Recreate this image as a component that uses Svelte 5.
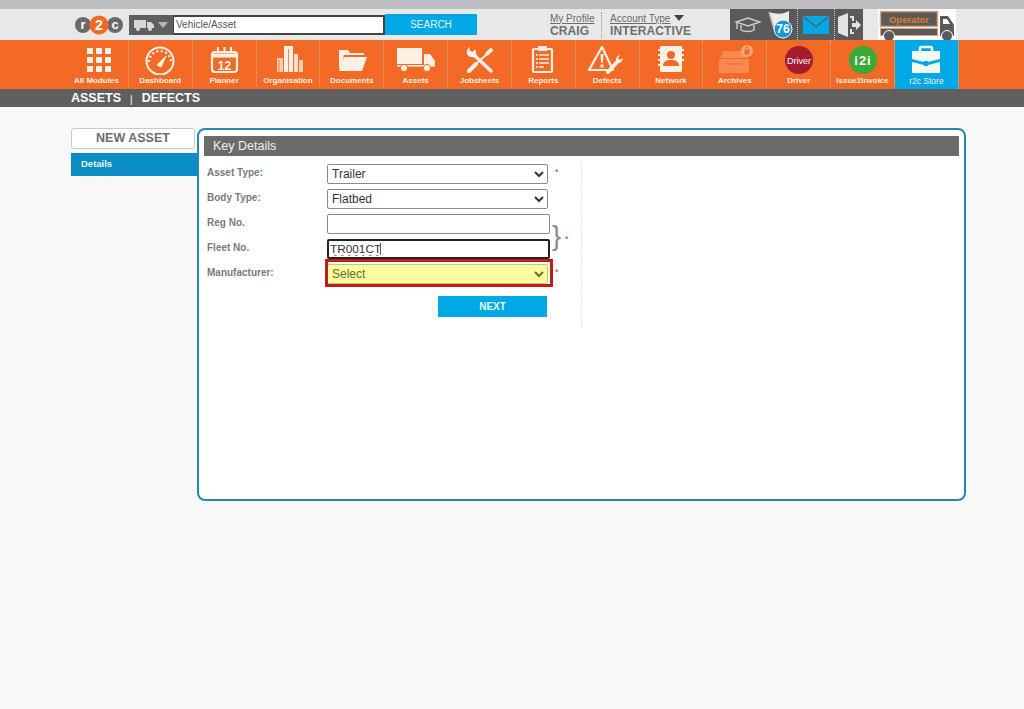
<script>
  let regNo = '';
  let fleetNo = 'TR001CT';
</script>

<div class="page">
  <div class="topstrip"></div>

  <header>
    <svg class="logo" width="48" height="20" viewBox="0 0 48 20">
      <circle cx="8" cy="10" r="8" fill="#6a6a6a" />
      <circle cx="40" cy="10" r="8" fill="#6a6a6a" />
      <circle cx="24" cy="10" r="9.5" fill="#f26a25" />
      <text x="8" y="14" class="lt">r</text>
      <text x="24" y="15" class="lt big">2</text>
      <text x="40" y="14" class="lt">c</text>
    </svg>

    <div class="typepick">
      <svg width="24" height="14" viewBox="0 0 24 14" fill="#d8d8d8">
        <rect x="1" y="2" width="12" height="8" />
        <path d="M14 4h4l3 3v3h-7z" />
        <circle cx="5" cy="11" r="2" /><circle cx="17" cy="11" r="2" />
      </svg>
      <span class="tri"></span>
    </div>
    <input class="search" type="text" value="Vehicle/Asset" />
    <button class="searchbtn">SEARCH</button>

    <div class="who">
      <a href="#profile">My Profile</a>
      <b>CRAIG</b>
    </div>
    <div class="who acct">
      <span><a href="#account">Account Type</a> <span class="tri dark"></span></span>
      <b>INTERACTIVE</b>
    </div>

    <div class="tools">
      <div class="tool" style="width:36px">
        <svg width="28" height="20" viewBox="0 0 28 20" fill="none" stroke="#cfcfcf" stroke-width="1.4">
          <path d="M2 7l12-4 12 4-12 4z" />
          <path d="M7 10v5c3 2 10 2 13 0v-5" />
          <path d="M3 8v6" />
        </svg>
      </div>
      <div class="tool flag" style="width:31px">
        <svg width="30" height="30" viewBox="0 0 30 30">
          <path d="M2 2c7 2 12 3 20-1v17c-4 3-9 3-15 1z" fill="#ececec" />
          <path d="M2 2l5 17" stroke="#bbb" stroke-width="1.5" />
          <circle cx="16" cy="19" r="9" fill="#1598d6" stroke="#fff" />
          <text x="16" y="23" class="badge">76</text>
        </svg>
      </div>
      <div class="tool dots" style="width:37px">
        <svg width="26" height="18" viewBox="0 0 26 18">
          <rect width="26" height="18" fill="#00a9e6" />
          <path d="M1 1l12 10L25 1" fill="none" stroke="#5a5a5a" stroke-width="1.3" />
        </svg>
      </div>
      <div class="tool dots" style="width:29px">
        <svg width="26" height="26" viewBox="0 0 26 26" fill="#e4e4e4">
          <path d="M2 5l10-4v24L2 21z" />
          <path d="M14 4h4v5h-2V6h-2zM14 17h2v3h2v2h-4z" />
          <path d="M16 11h4V8l5 5-5 5v-3h-4z" />
        </svg>
      </div>
    </div>

    <div class="operator">
      <svg width="78" height="31" viewBox="0 0 78 31">
        <rect x="2.5" y="2.5" width="57" height="15" fill="#5a5a5a" stroke="#d9a27d" stroke-width="1.5" />
        <text x="31" y="13.5" class="optext">Operator</text>
        <rect x="2.5" y="19.5" width="57" height="7" fill="#5a5a5a" stroke="#d9a27d" />
        <path d="M62 7h8l6 9v11H62z" fill="#5a5a5a" />
        <path d="M65 10h4l3 5h-7z" fill="#fff" />
        <circle cx="11" cy="27" r="5.5" fill="#5a5a5a" stroke="#fff" />
        <circle cx="69" cy="27" r="5.5" fill="#5a5a5a" stroke="#fff" />
      </svg>
    </div>
  </header>

  <nav>
    <a class="item" href="#modules">
      <svg viewBox="0 0 40 30" fill="#fdf1e6">
        <rect x="11" y="3" width="6" height="6" /><rect x="20" y="3" width="6" height="6" /><rect x="29" y="3" width="6" height="6" />
        <rect x="11" y="12" width="6" height="6" /><rect x="20" y="12" width="6" height="6" /><rect x="29" y="12" width="6" height="6" />
        <rect x="11" y="21" width="6" height="6" /><rect x="20" y="21" width="6" height="6" /><rect x="29" y="21" width="6" height="6" />
      </svg>
      All Modules
    </a>
    <a class="item" href="#dashboard">
      <svg viewBox="0 0 40 30" fill="none" stroke="#fdf1e6" stroke-width="2">
        <circle cx="20" cy="16" r="13.5" />
        <path d="M9 17a11 11 0 0 1 22 0" stroke-width="2.5" stroke-dasharray="2 2.5" />
        <path d="M17 20l9-9-5 11z" fill="#fdf1e6" stroke-width="1" />
      </svg>
      Dashboard
    </a>
    <a class="item" href="#planner">
      <svg viewBox="0 0 40 30">
        <rect x="8" y="7" width="25" height="20" rx="3" fill="none" stroke="#fdf1e6" stroke-width="2.2" />
        <path d="M8 10.5h25" stroke="#fdf1e6" stroke-width="4" />
        <path d="M14 2v6M20.5 2v6M27 2v6" stroke="#fdf1e6" stroke-width="2" />
        <text x="20.5" y="24.5" class="cal">12</text>
      </svg>
      Planner
    </a>
    <a class="item" href="#organisation">
      <svg viewBox="0 0 40 30" fill="#fdf1e6">
        <rect x="9" y="13" width="6" height="14" opacity=".75" />
        <rect x="16" y="1" width="9" height="26" />
        <rect x="26" y="9" width="4" height="18" opacity=".85" />
        <rect x="31" y="15" width="4" height="12" opacity=".75" />
        <path d="M20.5 4v23M11 15v12" stroke="#f26a25" stroke-width=".8" />
      </svg>
      Organisation
    </a>
    <a class="item" href="#documents">
      <svg viewBox="0 0 40 30" fill="#fdf1e6">
        <path d="M7 5h9l2 3h14v2H12l-3 12-2 2z" />
        <path d="M12 12h23l-5 14H7z" />
      </svg>
      Documents
    </a>
    <a class="item" href="#assets">
      <svg viewBox="0 0 40 30" fill="#fdf1e6">
        <rect x="1" y="3" width="25" height="16" />
        <path d="M28 9h6l5 7v5H28z" />
        <rect x="1" y="20" width="38" height="1.6" />
        <circle cx="8" cy="23" r="3.6" stroke="#f26a25" />
        <circle cx="31" cy="23" r="3.6" stroke="#f26a25" />
      </svg>
      Assets
    </a>
    <a class="item" href="#jobsheets">
      <svg viewBox="0 0 40 30" fill="none" stroke="#fdf1e6" stroke-linecap="round">
        <path d="M14 9l18 17" stroke-width="3.4" />
        <path d="M11 2a6.5 6.5 0 0 0-3 7l2 2.5 5 1 2.5-3-1-5-3.5 2.5-2.5-2z" fill="#fdf1e6" stroke="none" />
        <path d="M28 9L17 19" stroke-width="1.8" />
        <path d="M17 19l-7 7" stroke-width="4" />
        <path d="M26 8l6-5.5 2.5 3-6 5.5z" fill="#fdf1e6" stroke="none" />
      </svg>
      Jobsheets
    </a>
    <a class="item" href="#reports">
      <svg viewBox="0 0 40 30" fill="none" stroke="#fdf1e6">
        <rect x="10" y="4" width="19" height="23" rx="1" stroke-width="2.2" />
        <rect x="15" y="1" width="9" height="5" fill="#fdf1e6" stroke="none" />
        <path d="M13 10h13M13 14h13M13 18h13M13 22h8" stroke-width="1.5" stroke-dasharray="2 1 10 1" />
      </svg>
      Reports
    </a>
    <a class="item" href="#defects">
      <svg viewBox="0 0 40 30">
        <path d="M15 2L2 25h24z" fill="none" stroke="#fdf1e6" stroke-width="2.2" stroke-linejoin="round" />
        <path d="M13.5 9h3l-.6 9h-1.8z" fill="#fdf1e6" />
        <circle cx="15" cy="21" r="1.7" fill="#fdf1e6" />
        <path d="M21 27l10-11" stroke="#fdf1e6" stroke-width="4" stroke-linecap="round" />
        <path d="M30 18a5 5 0 0 1 3-8l-2 3 2 2 3-2a5 5 0 0 1-6 5z" fill="#fdf1e6" />
      </svg>
      Defects
    </a>
    <a class="item" href="#network">
      <svg viewBox="0 0 40 30">
        <rect x="9" y="1" width="22" height="26" rx="1" fill="#fdf1e6" />
        <circle cx="20" cy="10" r="4" fill="#f26a25" />
        <path d="M12 21c0-5 4-6 8-6s8 1 8 6z" fill="#f26a25" />
        <path d="M7 5h4M7 10h4M7 15h4M7 20h4M31 5h2M31 10h2M31 15h2" stroke="#fdf1e6" stroke-width="2" />
      </svg>
      Network
    </a>
    <a class="item" href="#archives">
      <svg viewBox="0 0 40 30">
        <path d="M5 13l4-7h20l4 7z" fill="#f68a52" />
        <rect x="4" y="14" width="30" height="14" fill="#f68a52" />
        <path d="M11 19h16" stroke="#f26a25" stroke-width="1.2" />
        <circle cx="32" cy="6" r="6" fill="#f9a67c" />
        <rect x="29.5" y="5" width="5" height="4.5" fill="#f26a25" />
        <path d="M30.5 5V3.5a1.5 1.5 0 0 1 3 0V5" fill="none" stroke="#f26a25" />
      </svg>
      Archives
    </a>
    <a class="item" href="#driver">
      <svg viewBox="0 0 40 30">
        <circle cx="20" cy="15" r="14" fill="#a51c30" />
        <text x="20" y="18.5" class="drv">Driver</text>
      </svg>
      Driver
    </a>
    <a class="item" href="#i2i">
      <svg viewBox="0 0 40 30">
        <circle cx="20" cy="15" r="14" fill="#3aaa35" />
        <text x="20" y="19.5" class="i2i">i2i</text>
      </svg>
      Issue2Invoice
    </a>
    <a class="item store" href="#store">
      <svg viewBox="0 0 40 30" fill="#f3f8f2">
        <path d="M14 6V3a1 1 0 0 1 1-1h10a1 1 0 0 1 1 1v3" fill="none" stroke="#f3f8f2" stroke-width="2.4" />
        <path d="M6 6h28v8l-12 3v-1h-4v1L6 14z" />
        <path d="M6 17l12 3v1h4v-1l12-3v11H6z" />
      </svg>
      r2c Store
    </a>
  </nav>

  <div class="subbar">
    <a href="#assets">ASSETS</a>
    <span class="pipe">|</span>
    <a href="#defects">DEFECTS</a>
  </div>

  <main>
    <aside>
      <button class="newasset">NEW ASSET</button>
      <div class="sideitem">Details</div>
    </aside>

    <section class="panel">
      <h2>Key Details</h2>
      <div class="formcol">
        <form on:submit|preventDefault>
          <label for="atype">Asset Type:</label>
          <select id="atype"><option>Trailer</option></select>
          <span class="req">*</span>

          <label for="btype">Body Type:</label>
          <select id="btype"><option>Flatbed</option></select>
          <span></span>

          <label for="reg">Reg No.</label>
          <input id="reg" type="text" bind:value={regNo} />
          <span class="brace">}<span class="req">*</span></span>

          <label for="fleet">Fleet No.</label>
          <div class="fleetwrap">
            <input id="fleet" class="active" type="text" bind:value={fleetNo} />
            <span class="caret"></span>
          </div>

          <label for="manu">Manufacturer:</label>
          <div class="manuwrap">
            <select id="manu" class="missing"><option>Select</option></select>
            <span class="redbox"></span>
          </div>
          <span class="req">*</span>

          <span></span>
          <button class="next" type="submit">NEXT</button>
        </form>
      </div>
    </section>
  </main>
</div>

<style>
  :global(body) {
    margin: 0;
    background: #f8f8f8;
    font-family: "Liberation Sans", Arial, sans-serif;
  }

  .page {
    min-height: 709px;
  }

  .topstrip {
    height: 9px;
    background: #bdbec1;
  }

  header {
    height: 31px;
    background: #e8e8e8;
    display: flex;
    align-items: center;
    padding-left: 75px;
    box-sizing: border-box;
  }

  .logo {
    margin-right: 6px;
  }

  .lt {
    fill: #fff;
    font: bold 13px "Liberation Sans", sans-serif;
    text-anchor: middle;
  }

  .big {
    font-size: 14px;
  }

  .typepick {
    width: 44px;
    height: 20px;
    background: #5f5f5f;
    display: flex;
    align-items: center;
    justify-content: space-between;
    padding: 0 5px 0 4px;
    box-sizing: border-box;
  }

  .tri {
    display: inline-block;
    width: 0;
    height: 0;
    border-left: 5px solid transparent;
    border-right: 5px solid transparent;
    border-top: 6px solid #b5b5b5;
  }

  .tri.dark {
    border-top-color: #444;
    margin-left: 1px;
    vertical-align: 1px;
  }

  .search {
    width: 212px;
    height: 20px;
    box-sizing: border-box;
    border: 2px solid #444;
    border-left-width: 1px;
    padding: 0 2px;
    font: 10px "Liberation Sans", sans-serif;
    color: #555;
    background: #fff;
  }

  .searchbtn {
    width: 92px;
    height: 21px;
    border: none;
    background: #00a9e6;
    color: #e6f6fc;
    font: 10px "Liberation Sans", sans-serif;
    padding: 0;
  }

  .who {
    display: flex;
    flex-direction: column;
    margin-left: 73px;
    width: 51px;
    border-right: 1px dotted #999;
    font-size: 10px;
    line-height: 13px;
    color: #6a6a6a;
    height: 26px;
  }

  .who a {
    color: #6a6a6a;
  }

  .who b {
    font-size: 12px;
    letter-spacing: .1px;
    color: #6f6f6f;
  }

  .who.acct {
    margin-left: 8px;
    width: 120px;
    border: none;
  }

  .tools {
    height: 31px;
    display: flex;
    background: #5a5a5a;
    width: 133px;
  }

  .tool {
    display: flex;
    align-items: center;
    justify-content: center;
    box-sizing: border-box;
    height: 31px;
  }

  .tool.dots {
    border-left: 1px dotted #ccc;
  }

  .operator {
    width: 78px;
    height: 31px;
    margin-left: 15px;
    background: #fff;
  }

  .operator svg,
  .flag svg {
    display: block;
  }

  .optext {
    fill: #e2792f;
    font: bold 9.5px "Liberation Sans", sans-serif;
    text-anchor: middle;
  }

  .badge {
    fill: #fff;
    font: bold 12px "Liberation Sans", sans-serif;
    text-anchor: middle;
  }

  nav {
    height: 49px;
    background: #f26a25;
    display: flex;
    padding-left: 65px;
  }

  .item {
    width: 63.85px;
    box-sizing: border-box;
    flex: none;
    border-right: 1px dotted #f6ae88;
    display: flex;
    flex-direction: column;
    align-items: center;
    padding-top: 5px;
    color: #fdeee3;
    font-size: 8px;
    font-weight: bold;
    line-height: 12px;
    text-decoration: none;
    white-space: nowrap;
    height: 47px;
  }

  .item svg {
    width: 40px;
    height: 30px;
    flex: none;
  }

  .item.store {
    background: #00a9e6;
    height: 49px;
    font-weight: normal;
    font-size: 8.5px;
  }

  .cal {
    fill: #fdf1e6;
    font: bold 12px "Liberation Sans", sans-serif;
    text-anchor: middle;
  }

  .drv {
    fill: #fff;
    font: 9px "Liberation Sans", sans-serif;
    text-anchor: middle;
  }

  .i2i {
    fill: #fff;
    font: bold 13px "Liberation Sans", sans-serif;
    letter-spacing: 1px;
    text-anchor: middle;
  }

  .subbar {
    height: 18px;
    background: #5f5f5f;
    padding-left: 71px;
    display: flex;
    align-items: center;
    gap: 9px;
    font-size: 12.5px;
    font-weight: bold;
    color: #fff;
  }

  .subbar a {
    color: #fff;
    text-decoration: none;
  }

  .pipe {
    font-size: 10px;
    font-weight: normal;
    padding-top: 2px;
  }

  main {
    display: flex;
    padding: 21px 0 0 71px;
  }

  aside {
    width: 126px;
    flex: none;
  }

  .newasset {
    display: block;
    width: 124px;
    height: 21px;
    box-sizing: border-box;
    border: 1px solid #c9c9c9;
    border-radius: 3px;
    background: #fff;
    color: #6d6d6d;
    font: bold 12.5px "Liberation Sans", sans-serif;
    padding: 0 0 2px;
  }

  .sideitem {
    margin-top: 4px;
    height: 23px;
    background: #0a8dc2;
    color: #e8f4fa;
    font-size: 9.5px;
    font-weight: bold;
    line-height: 22px;
    padding-left: 10px;
  }

  .panel {
    width: 769px;
    height: 373px;
    box-sizing: border-box;
    border: 2px solid #1f8daa;
    border-radius: 8px;
    padding: 6px 5px;
    background: #fff;
  }

  h2 {
    margin: 0;
    height: 20px;
    background: #6b6b6b;
    color: #f0f0f0;
    font-size: 12.5px;
    font-weight: normal;
    line-height: 20px;
    padding-left: 9px;
  }

  .formcol {
    width: 378px;
    height: 166px;
    margin-top: 6px;
    box-sizing: border-box;
    border-right: 1px dashed #e2e2e2;
    padding: 2px 0 0 3px;
  }

  form {
    display: grid;
    grid-template-columns: 120px 223px 1fr;
    grid-auto-rows: 20px;
    row-gap: 5px;
    align-items: start;
  }

  label {
    font-size: 10px;
    font-weight: bold;
    color: #7a7a7a;
    line-height: 18px;
  }

  select {
    width: 221px;
    height: 20px;
    box-sizing: border-box;
    border: 1px solid #8a8a8a;
    border-radius: 2px;
    background-color: #fff;
    color: #333;
    font: 12px "Liberation Sans", sans-serif;
    padding-left: 0;
  }

  input#reg,
  input#fleet {
    width: 223px;
    height: 20px;
    box-sizing: border-box;
    border: 1px solid #8a8a8a;
    border-radius: 2px;
    background: #fff;
    padding: 0 1px;
    font: 11.8px "Liberation Sans", sans-serif;
    color: #333;
    display: block;
  }

  input#fleet {
    border: 2px solid #222;
    text-decoration: underline wavy #d05050 1px;
  }

  .fleetwrap,
  .manuwrap {
    position: relative;
    height: 20px;
  }

  .caret {
    position: absolute;
    left: 53px;
    top: 4px;
    width: 1px;
    height: 12px;
    background: #555;
  }

  select.missing {
    display: block;
    background-color: #fbfb9f;
    color: #6d6d2a;
    border-color: #c9c96a;
  }

  .redbox {
    position: absolute;
    left: -2px;
    top: -5px;
    width: 228px;
    height: 28px;
    box-sizing: border-box;
    border: 3px solid #c01a1a;
    pointer-events: none;
  }

  .req {
    color: #c8322c;
    font-size: 9px;
    padding-left: 5px;
    line-height: 17px;
  }

  .brace {
    grid-row: span 2;
    align-self: center;
    display: flex;
    align-items: center;
    font: 300 27px "Liberation Sans", sans-serif;
    color: #888;
    padding-left: 2px;
    height: 30px;
  }

  .brace .req {
    padding-left: 4px;
    padding-top: 5px;
  }

  .next {
    grid-column: 2;
    justify-self: end;
    width: 109px;
    height: 21px;
    margin: 7px 3px 0 0;
    border: none;
    background: #00a9e6;
    color: #e6f6fc;
    font: bold 10px "Liberation Sans", sans-serif;
    padding: 0;
  }
</style>
